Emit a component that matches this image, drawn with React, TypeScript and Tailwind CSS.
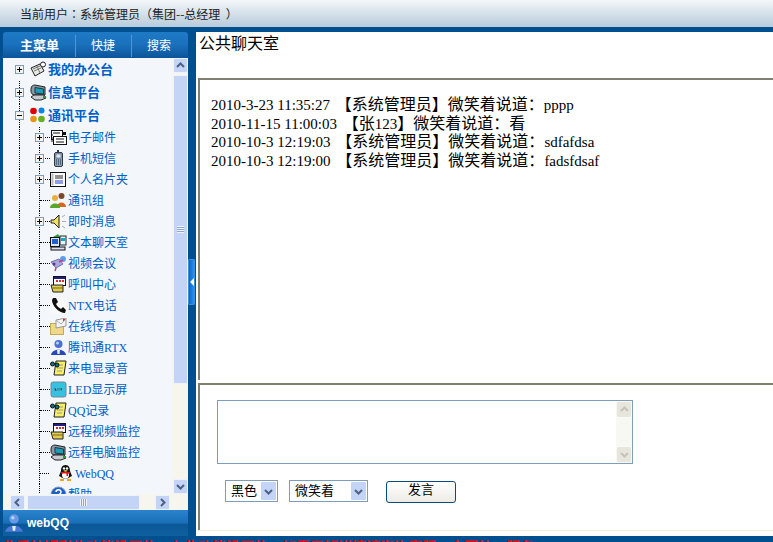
import React from "react";

const Office = () => (
  <svg viewBox="0 0 17 17" className="w-[17px] h-[17px]">
    <path d="M1 7 L10 3 L14 10 L5 15 Z" fill="#e8e8e4" stroke="#222" />
    <path d="M3 8 L10 5 M4 10 L11 7 M7 5 L10 12" stroke="#777" fill="none" />
    <circle cx="13" cy="3.5" r="2.5" fill="#fff" stroke="#222" />
  </svg>
);
const Monitor = () => (
  <svg viewBox="0 0 17 17" className="w-[17px] h-[17px]">
    <path d="M1 5 C1 2 3 1 5 1 L15 3 V11 L5 11 C2 11 1 9 1 7 Z" fill="#8a98a6" stroke="#222" />
    <path d="M5 3.5 L13.5 5 V10 L5 9 Z" fill="#18a0b8" stroke="#234" />
    <path d="M1 13 L4 11 H14 L16 14 L11 16 H5 Z" fill="#c4ccd0" stroke="#222" />
    <rect x="13" y="12" width="3" height="2" fill="#2c9a2c" />
  </svg>
);
const Dots = () => (
  <svg viewBox="0 0 17 17" className="w-[17px] h-[17px]">
    <circle cx="3.5" cy="4" r="3.3" fill="#e00000" />
    <circle cx="11.5" cy="3.5" r="3" fill="#0a86e0" />
    <circle cx="3.5" cy="12" r="3.3" fill="#e8961a" />
    <circle cx="11.5" cy="12" r="3.3" fill="#68b020" />
  </svg>
);
const Mail = () => (
  <svg viewBox="0 0 17 17" className="w-[17px] h-[17px]">
    <rect x="1.5" y="1.5" width="11" height="9" fill="#fff" stroke="#111" />
    <rect x="3.5" y="7.5" width="13" height="8" fill="#fff" stroke="#111" />
    <path d="M3 4 H10 M1 6 H3 M1 9 H3 M1 12 H3 M6 10 H14 M6 13 H14" stroke="#111" />
    <rect x="12" y="3" width="4" height="3" fill="#111" />
  </svg>
);
const Mobile = () => (
  <svg viewBox="0 0 17 17" className="w-[17px] h-[17px]">
    <rect x="4.5" y="2.5" width="8" height="14" rx="1.5" fill="#8ea6bc" stroke="#334" />
    <rect x="7" y="0" width="2" height="3" fill="#334" />
    <rect x="6" y="4" width="5" height="4" fill="#d8e8f0" stroke="#445" strokeWidth="0.5" />
    <path d="M6 10 H11 M6 12 H11 M6 14 H11" stroke="#234" strokeDasharray="1 1" />
  </svg>
);
const Card = () => (
  <svg viewBox="0 0 17 17" className="w-[17px] h-[17px]">
    <rect x="0.5" y="1.5" width="15" height="14" fill="#fff" stroke="#111" />
    <rect x="1.5" y="2.5" width="2" height="12" fill="#bbb" />
    <path d="M5 5 H13 M5 7 H13" stroke="#222" />
    <path d="M5 10 H13 M5 12 H13" stroke="#1a3ad0" />
  </svg>
);
const Group = () => (
  <svg viewBox="0 0 17 17" className="w-[17px] h-[17px]">
    <circle cx="11.5" cy="4" r="3" fill="#7a4a28" />
    <path d="M7 15 C7 9 16 9 16 15 Z" fill="#d8661c" />
    <circle cx="5" cy="6" r="3" fill="#e8b040" />
    <path d="M0 16 C0 10 10 10 10 16 Z" fill="#58a828" />
  </svg>
);
const Speaker = () => (
  <svg viewBox="0 0 17 17" className="w-[17px] h-[17px]">
    <path d="M1 7 H4 L9 2 V15 L4 10 H1 Z" fill="#f0e060" stroke="#222" />
    <path d="M12 4 L15 2 M12 8.5 H16 M12 13 L15 15" stroke="#aaa" fill="none" />
  </svg>
);
const ChatPc = () => (
  <svg viewBox="0 0 17 17" className="w-[17px] h-[17px]">
    <path d="M3 3 L8 0 L10 3" fill="#3a9a3a" />
    <rect x="0.5" y="3.5" width="9" height="9" fill="#d8e8f8" stroke="#111" />
    <rect x="2" y="5" width="6" height="5" fill="#2060d0" />
    <rect x="10" y="2" width="6" height="9" fill="#e8f4f8" stroke="#223" />
    <rect x="11" y="4" width="4" height="3" fill="#10a8c0" />
    <rect x="1" y="13" width="14" height="3" fill="#dde" stroke="#111" />
  </svg>
);
const Video = () => (
  <svg viewBox="0 0 17 17" className="w-[17px] h-[17px]">
    <circle cx="13" cy="4" r="3" fill="#5aa0f0" />
    <path d="M1 7 L9 4 L13 9 L6 13 Z" fill="#a8a8dc" stroke="#7070b0" />
    <path d="M9 7 L13 5 M6 13 L5 16" stroke="#c04080" strokeWidth="1.5" />
    <circle cx="4" cy="9" r="1.5" fill="#603090" />
  </svg>
);
const CallBox = () => (
  <svg viewBox="0 0 17 17" className="w-[17px] h-[17px]">
    <rect x="3.5" y="0.5" width="12" height="9" fill="#fff" stroke="#111" />
    <rect x="4" y="1" width="11" height="2" fill="#20208a" />
    <path d="M6 5 H8 M9 5 H11 M12 5 H14" stroke="#d03030" strokeWidth="2" />
    <path d="M1 9 L13 9 V16 H3 Z" fill="#e0cc50" stroke="#222" />
    <path d="M3 12 H13" stroke="#7a6a10" />
  </svg>
);
const Handset = () => (
  <span className="w-[17px] h-[17px] bg-[#f8f8f8] flex items-center justify-center">
    <svg viewBox="0 0 17 17" className="w-[17px] h-[17px]">
      <path d="M3 1 L6 1 L8 5 L6 7 C7 9 9 11 11 12 L13 10 L16 13 L15 16 C9 16 2 9 2 3 Z" fill="#111" />
    </svg>
  </span>
);
const Fax = () => (
  <svg viewBox="0 0 17 17" className="w-[17px] h-[17px]">
    <rect x="0.5" y="5.5" width="13" height="11" fill="#f0d888" stroke="#c8a850" />
    <path d="M6 2 L16 0 V8 L6 10 Z" fill="#f4f4f4" stroke="#999" />
    <rect x="13" y="1" width="2" height="2" fill="#e03030" />
    <path d="M6 2 L11 6 L16 1" fill="none" stroke="#aaa" />
  </svg>
);
const Person = ({ light }: { light?: boolean }) => (
  <svg viewBox="0 0 17 17" className="w-full h-full">
    <circle cx="8.5" cy="5" r="4" fill={light ? "#6a98e8" : "#4a70d8"} />
    <circle cx="7.5" cy="4" r="1.5" fill="#b8d0f8" />
    <path d="M1 16 C2 9 15 9 16 16 Z" fill={light ? "#4a78d8" : "#2848b8"} />
    <path d="M7 11 H10 L9.5 15 H7.5 Z" fill="#e8eef8" />
  </svg>
);
const Binocular = () => (
  <svg viewBox="0 0 17 17" className="w-[17px] h-[17px]">
    <path d="M6 1 H16 L14 15 H4 Z" fill="#f8f060" stroke="#222" />
    <path d="M8 5 H13 M7 8 H13 M7 11 H12" stroke="#999" />
    <circle cx="2.5" cy="4" r="2" fill="#107080" stroke="#111" />
    <circle cx="7" cy="5" r="2" fill="#107080" stroke="#111" />
  </svg>
);
const Led = () => (
  <svg viewBox="0 0 17 17" className="w-[17px] h-[17px]">
    <rect x="1" y="1" width="15" height="15" rx="2" fill="#38c0e0" stroke="#708898" />
    <path d="M5 7 V9.5 H6.5 M8 7 V9.5 M10 7 V9.5 M11.5 7 V9.5" stroke="#406070" />
  </svg>
);
const Penguin = () => (
  <svg viewBox="0 0 15 16" className="w-[15px] h-[16px]">
    <path d="M7.5 0 C11 0 12 3 12 6 L14 11 L12 12 C10 14 5 14 3 12 L1 11 L3 6 C3 3 4 0 7.5 0 Z" fill="#111" />
    <ellipse cx="7.5" cy="10" rx="3.5" ry="3.5" fill="#fff" />
    <circle cx="6" cy="3.5" r="1.2" fill="#fff" />
    <circle cx="9" cy="3.5" r="1.2" fill="#fff" />
    <path d="M5 5 H10 L7.5 6.5 Z" fill="#f0a810" />
    <path d="M3 7 H12 V8.5 H10 V11 H8.5 V8.5 H3 Z" fill="#e01010" />
    <path d="M2 14 H6 V16 H2 Z M9 14 H13 V16 H9 Z" fill="#f0a810" />
  </svg>
);
const Help = () => (
  <svg viewBox="0 0 17 17" className="w-[17px] h-[17px]">
    <circle cx="8.5" cy="8.5" r="7.5" fill="#2060c0" stroke="#8098c0" />
    <path d="M6 6 C6 3 11 3 11 6 C11 8 8.5 8 8.5 10" stroke="#fff" strokeWidth="1.5" fill="none" />
  </svg>
);

function Chevron({ dir, color }: { dir: "up" | "down" | "left" | "right"; color: string }) {
  const d = {
    up: "M1 6 L4.5 2.5 L8 6",
    down: "M1 3 L4.5 6.5 L8 3",
    left: "M6 1 L2.5 4.5 L6 8",
    right: "M3 1 L6.5 4.5 L3 8",
  }[dir];
  return (
    <svg viewBox="0 0 9 9" className="w-[9px] h-[9px]">
      <path d={d} fill="none" stroke={color} strokeWidth="2" />
    </svg>
  );
}

function ScrollBtn({ dir }: { dir: "up" | "down" | "left" | "right" }) {
  return (
    <span className="w-[15px] h-[15px] shrink-0 flex items-center justify-center bg-[#c4d4f6] border border-[#eef2fb] rounded-[2px]">
      <Chevron dir={dir} color="#4d6185" />
    </span>
  );
}

function Toggle({ open, className }: { open?: boolean; className: string }) {
  return (
    <span className={`absolute w-[9px] h-[9px] bg-[#f4f4ee] border border-[#7f9db9] flex items-center justify-center ${className}`}>
      <span className="relative w-[5px] h-px bg-black">
        {!open && <span className="absolute left-[2px] top-[-2px] w-px h-[5px] bg-black" />}
      </span>
    </span>
  );
}

function TopRow({ icon, label, open, first }: { icon: React.ReactNode; label: string; open?: boolean; first?: boolean }) {
  return (
    <div className="relative flex items-center h-[23px] shrink-0">
      <span className={`ml-[16px] w-[11px] h-full ${first ? "" : "border-l border-dotted border-black"}`} />
      <Toggle open={open} className="left-[12px] top-[7px]" />
      <span className="shrink-0 w-[17px] h-[17px]">{icon}</span>
      <span className="ml-px text-[13px] font-bold text-[#0060c8] whitespace-nowrap">{label}</span>
    </div>
  );
}

function SubRow({ icon, label, toggle, far }: { icon: React.ReactNode; label: string; toggle?: boolean; far?: boolean }) {
  return (
    <div className="relative flex items-center h-[21px] shrink-0">
      <span className="ml-[16px] w-[20px] h-full border-l border-dotted border-black" />
      <span className="h-full border-l border-dotted border-black flex items-center">
        <span className={`${far ? "w-[9px]" : "w-[10px]"} border-t border-dotted border-black`} />
      </span>
      {toggle && <Toggle className="left-[32px] top-[6px]" />}
      <span className={`shrink-0 ${far ? "ml-[9px] w-[15px]" : "w-[17px]"} h-[17px]`}>{icon}</span>
      <span className={`${far ? "ml-[2px]" : "ml-px"} text-[12px] text-[#0060c8] whitespace-nowrap`}>{label}</span>
    </div>
  );
}

const serif = "[font-family:'Liberation_Serif',serif]";
const cjk = "[font-family:'Noto_Sans_CJK_SC',sans-serif]";

function ChatLine({ time, who, tail, text }: { time: string; who: React.ReactNode; tail: string; text: React.ReactNode }) {
  return (
    <div className="h-[18.67px] leading-[19px] whitespace-nowrap text-black">
      <span className={`${serif} text-[15px]`}>{time} </span>
      <span className={`${cjk} text-[16px] ml-[2px]`}>【{who}】微笑着说道：{tail}</span>
      {text}
    </div>
  );
}

function Latin({ children }: { children: React.ReactNode }) {
  return <span className={`${serif} text-[15px]`}>{children}</span>;
}

function PickBox({ label, width }: { label: string; width: string }) {
  return (
    <div className={`${width} h-[22px] border border-[#7f9db9] bg-white flex items-center justify-between pl-[5px] pr-px`}>
      <span className="text-[13px] text-black">{label}</span>
      <span className="w-[15px] h-[18px] bg-[#c4d4f6] flex items-center justify-center rounded-[1px]">
        <Chevron dir="down" color="#4d6185" />
      </span>
    </div>
  );
}

export default function App() {
  return (
    <div className="w-[773px] h-[542px] overflow-hidden flex flex-col bg-[#00508f] [font-family:'Liberation_Serif','Noto_Sans_CJK_SC',serif]">
      <header className="h-[27px] shrink-0 bg-gradient-to-b from-[#f4f7fa] to-[#b7cbdb] flex items-center pl-[20px] text-[12px] text-[#222] whitespace-pre [font-family:'Noto_Sans_CJK_TC',sans-serif]">
        当前用户：系统管理员（集团--总经理  ）
      </header>

      <div className="h-[509px] shrink-0 flex pt-[5px] pl-[3px]">
        <aside className="w-[185px] shrink-0 flex flex-col">
          <div className="h-[26px] shrink-0 flex items-center pt-[2px] rounded-t-[3px] text-white bg-gradient-to-b from-[#1f7ac6] via-[#1a70bc] to-[#0b5499] whitespace-nowrap">
            <span className="w-[72px] pl-[17px] text-[13px] font-bold">主菜单</span>
            <span className="w-px h-[22px] bg-[#4f97d4]" />
            <span className="w-[55px] pl-[15px] text-[12px]">快捷</span>
            <span className="w-px h-[22px] bg-[#4f97d4]" />
            <span className="pl-[15px] text-[12px]">搜索</span>
          </div>

          <div className="h-[452px] shrink-0 flex bg-[#f3f7fb]">
            <div className="w-[169px] shrink-0 flex flex-col">
              <div className="flex-1 flex flex-col overflow-hidden">
                <TopRow first icon={<Office />} label="我的办公台" />
                <TopRow icon={<Monitor />} label="信息平台" />
                <TopRow open icon={<Dots />} label="通讯平台" />
                <SubRow toggle icon={<Mail />} label="电子邮件" />
                <SubRow toggle icon={<Mobile />} label="手机短信" />
                <SubRow toggle icon={<Card />} label="个人名片夹" />
                <SubRow icon={<Group />} label="通讯组" />
                <SubRow toggle icon={<Speaker />} label="即时消息" />
                <SubRow icon={<ChatPc />} label="文本聊天室" />
                <SubRow icon={<Video />} label="视频会议" />
                <SubRow icon={<CallBox />} label="呼叫中心" />
                <SubRow icon={<Handset />} label="NTX电话" />
                <SubRow icon={<Fax />} label="在线传真" />
                <SubRow icon={<Person />} label="腾讯通RTX" />
                <SubRow icon={<Binocular />} label="来电显录音" />
                <SubRow icon={<Led />} label="LED显示屏" />
                <SubRow icon={<Binocular />} label="QQ记录" />
                <SubRow icon={<CallBox />} label="远程视频监控" />
                <SubRow icon={<Monitor />} label="远程电脑监控" />
                <SubRow far icon={<Penguin />} label="WebQQ" />
                <SubRow icon={<Help />} label="帮助" />
              </div>
              <div className="h-[16px] shrink-0 flex items-center pl-[7px] bg-[#f6f6ef]">
                <ScrollBtn dir="left" />
                <span className="ml-[2px] w-[113px] h-[15px] bg-[#c4d4f6] border border-[#eef2fb] rounded-[2px] flex items-center justify-center">
                  <span className="w-[7px] h-[7px] bg-[repeating-linear-gradient(90deg,#eef3fd_0_1px,#8ea6d4_1px_2px)]" />
                </span>
                <span className="flex-1" />
                <ScrollBtn dir="right" />
                <span className="w-[2px]" />
              </div>
            </div>
            <div className="w-[16px] shrink-0 flex flex-col items-center bg-[#f6f6ef]">
              <ScrollBtn dir="up" />
              <span className="mt-[2px] w-[15px] h-[309px] bg-[#c4d4f6] border border-[#eef2fb] rounded-[2px] flex items-center justify-center">
                <span className="w-[7px] h-[7px] bg-[repeating-linear-gradient(0deg,#eef3fd_0_1px,#8ea6d4_1px_2px)]" />
              </span>
              <span className="flex-1" />
              <ScrollBtn dir="down" />
              <span className="h-[16px] shrink-0" />
            </div>
          </div>

          <div className="h-[26px] shrink-0 flex items-center bg-[linear-gradient(#2a83cc,#1870b8_50%,#0b5798_55%,#0f609f)]">
            <span className="ml-px w-[20px] h-[22px]">
              <Person light />
            </span>
            <span className="ml-[3px] text-[12px] font-bold text-white [font-family:'Liberation_Sans',sans-serif]">webQQ</span>
          </div>
        </aside>

        <div className="w-[8px] shrink-0 pt-[227px]">
          <div className="w-[7px] h-[46px] bg-gradient-to-r from-[#0a66c8] to-[#2a90ee] border border-[#3b8fd8] rounded-[1px] flex items-center justify-center">
            <span className="w-0 h-0 border-y-[4px] border-y-transparent border-r-[4px] border-r-white" />
          </div>
        </div>

        <main className="flex-1 min-w-0 bg-white pl-[2px] flex flex-col">
          <div className={`h-[46px] shrink-0 ${cjk} text-[16px] leading-[20px] text-black pl-px`}>公共聊天室</div>

          <section className="h-[302px] shrink-0 border-l-2 border-t-2 border-[#808070] pl-[11px] pt-[14px]">
            <ChatLine time="2010-3-23 11:35:27" who="系统管理员" tail="" text={<Latin>pppp</Latin>} />
            <ChatLine time="2010-11-15 11:00:03" who={<>张<Latin>123</Latin></>} tail="看" text={null} />
            <ChatLine time="2010-10-3 12:19:03" who="系统管理员" tail="" text={<Latin>sdfafdsa</Latin>} />
            <ChatLine time="2010-10-3 12:19:00" who="系统管理员" tail="" text={<Latin>fadsfdsaf</Latin>} />
          </section>

          <section className="mt-[3px] h-[147px] shrink-0 border-l-2 border-t-2 border-[#808070] pl-[17px] pt-[15px]">
            <div className="w-[416px] h-[64px] border border-[#7f9db9] flex bg-white">
              <textarea className="flex-1 resize-none outline-none" />
              <div className="w-[16px] flex flex-col justify-between items-center py-px bg-[#f8f8f3]">
                <span className="w-[14px] h-[15px] bg-[#e6e6dd] rounded-[2px] flex items-center justify-center">
                  <Chevron dir="up" color="#c4c4ba" />
                </span>
                <span className="w-[14px] h-[15px] bg-[#e6e6dd] rounded-[2px] flex items-center justify-center">
                  <Chevron dir="down" color="#c4c4ba" />
                </span>
              </div>
            </div>
            <div className="mt-[16px] ml-[8px] flex items-start">
              <PickBox label="黑色" width="w-[53px]" />
              <span className="w-[11px]" />
              <PickBox label="微笑着" width="w-[79px]" />
              <button className="ml-[18px] mt-px w-[70px] h-[22px] border border-[#0a4a80] rounded-[3px] bg-gradient-to-b from-white to-[#ecebe5] text-[13px] text-black leading-[16px] pb-[4px]">
                发言
              </button>
            </div>
          </section>
          <div className="border-t border-[#efefdc]" />
        </main>
      </div>

      <div className="h-[6px] shrink-0 overflow-hidden pl-[2px] pt-[3px] text-[14px] leading-[18px] font-bold text-[#ff0000] whitespace-nowrap">
        此系统短彩信功能没开放，有些功能没开放，如需了解详情请咨询客服，全国统一服务：400-000-0000 QQ：000000 000000000
      </div>
    </div>
  );
}
